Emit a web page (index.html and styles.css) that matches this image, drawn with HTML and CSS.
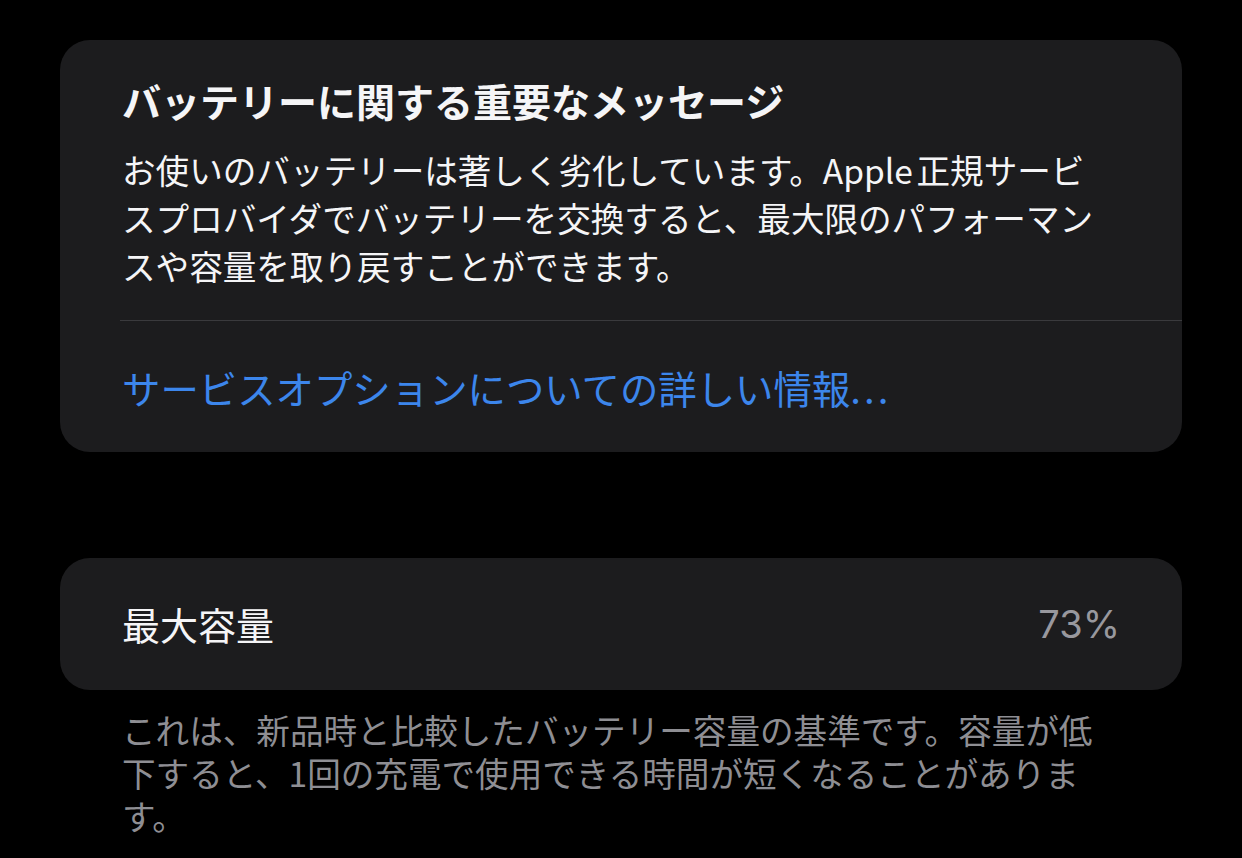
FILE: index.html
```html
<!DOCTYPE html>
<html lang="ja">
<head>
    <meta charset="UTF-8">
    <meta name="viewport" content="width=device-width, initial-scale=1.0">
    <title>バッテリーの状態</title>
    <link rel="stylesheet" href="styles.css">
</head>
<body>

    <div class="page">
        <!-- Warning card -->
        <div class="card message-card">
            <div class="message-body">
                <h1 class="message-title">バッテリーに関する重要なメッセージ</h1>
                <p class="message-text">お使いのバッテリーは著しく劣化しています。Apple 正規サービ<br>スプロバイダでバッテリーを交換すると、最大限のパフォーマン<br>スや容量を取り戻すことができます。</p>
            </div>
            <div class="divider"></div>
            <div class="link-row">
                <a class="link" href="#">サービスオプションについての詳しい情報<span class="dots">...</span></a>
            </div>
        </div>

        <!-- Capacity -->
        <div class="card capacity-card">
            <span class="row-label">最大容量</span>
            <span class="row-value">73%</span>
        </div>
        <p class="footnote">これは、新品時と比較したバッテリー容量の基準です。容量が低<br>下すると、1回の充電で使用できる時間が短くなることがありま<br>す。</p>
    </div>

</body>
</html>
```

FILE: styles.css
```css
/* Basic Reset */
* {
    margin: 0;
    padding: 0;
    box-sizing: border-box;
}

body {
    font-family: "Noto Sans CJK JP", "Noto Sans", sans-serif;
    background: #000;
    color: #f5f5f7;
    width: 1242px;
    height: 858px;
    overflow: hidden;
}

.page {
    padding: 40px 60px 0;
}

.card {
    background: #1c1c1e;
    border-radius: 30px;
}

/* Message card */
.message-body {
    padding: 35px 40px 30px 62px;
}

.message-title {
    font-size: 39px;
    font-weight: 700;
    line-height: 50px;
    margin-bottom: 21px;
}

.message-text {
    font-size: 33.6px;
    line-height: 48px;
    word-spacing: -4px;
}

.divider {
    margin-left: 60px;
    height: 1px;
    background: #3a3a3d;
}

.link-row {
    height: 131px;
    display: flex;
    align-items: center;
    padding-left: 62px;
}

.link {
    font-size: 38.4px;
    color: #3c86ec;
    text-decoration: none;
    line-height: 48px;
}

.dots {
    letter-spacing: 3px;
}

/* Capacity row */
.capacity-card {
    margin-top: 106px;
    height: 132px;
    display: flex;
    align-items: center;
    justify-content: space-between;
    padding: 0 62px;
}

.row-label {
    font-size: 38px;
    line-height: 48px;
}

.row-value {
    font-family: Inter, "Noto Sans", sans-serif;
    font-size: 38px;
    color: #98989e;
    line-height: 48px;
}

.footnote {
    margin-top: 18px;
    padding-left: 62px;
    font-size: 33.6px;
    line-height: 43px;
    color: #8e8e93;
}
```
